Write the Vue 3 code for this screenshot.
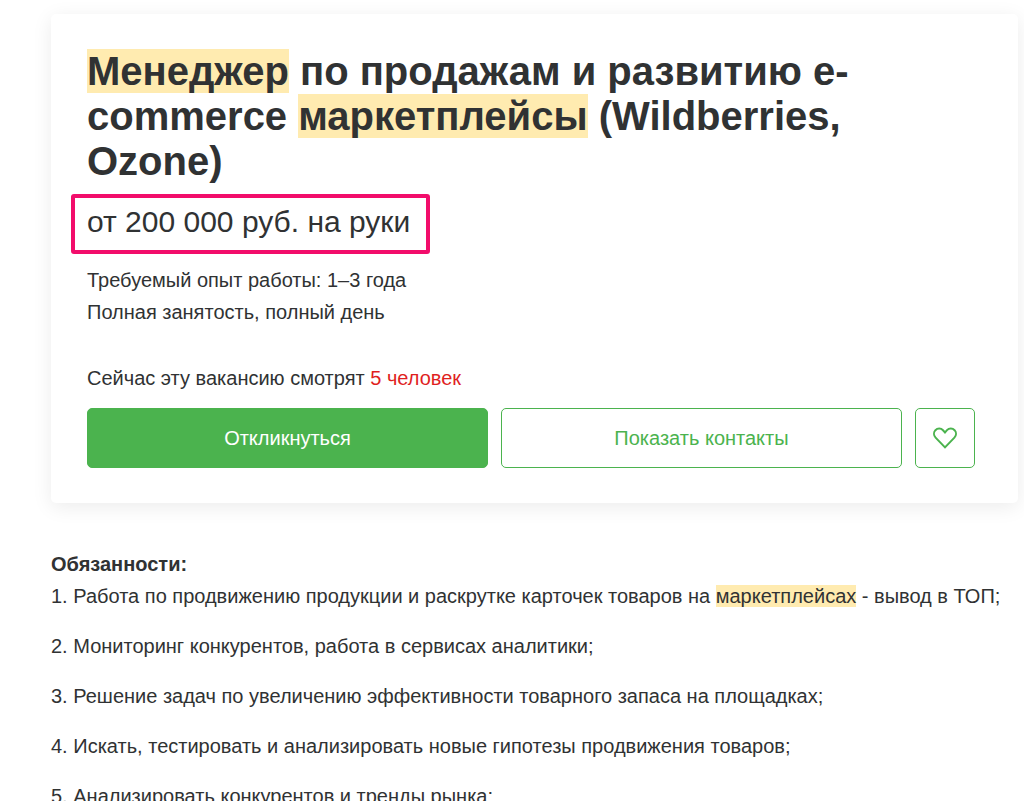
<script setup>
import { ref } from 'vue'

const liked = ref(false)

const duties = [
  [
    { text: 'Работа по продвижению продукции и раскрутке карточек товаров на ' },
    { text: 'маркетплейсах', mark: true },
    { text: ' - вывод в ТОП;' },
  ],
  [{ text: 'Мониторинг конкурентов, работа в сервисах аналитики;' }],
  [{ text: 'Решение задач по увеличению эффективности товарного запаса на площадках;' }],
  [{ text: 'Искать, тестировать и анализировать новые гипотезы продвижения товаров;' }],
  [{ text: 'Анализировать конкурентов и тренды рынка;' }],
]
</script>

<template>
  <main class="page">
    <section class="card">
      <h1 class="title">
        <mark>Менеджер</mark> по продажам и развитию e-commerce <mark>маркетплейсы</mark> (Wildberries, Ozone)
      </h1>
      <p class="salary">от 200 000 руб. на руки</p>
      <p class="fact">Требуемый опыт работы: 1–3 года</p>
      <p class="fact">Полная занятость, полный день</p>
      <p class="viewers">Сейчас эту вакансию смотрят <span class="count">5 человек</span></p>
      <div class="actions">
        <button type="button" class="btn primary">Откликнуться</button>
        <button type="button" class="btn">Показать контакты</button>
        <button type="button" class="btn like" aria-label="В избранное" :aria-pressed="liked" @click="liked = !liked">
          <svg width="24" height="22" viewBox="0 0 24 22" fill="none" stroke="currentColor" stroke-width="2">
            <path d="M12 20.4 2.6 10.6A5.4 5.4 0 0 1 2.4 3.2 5.2 5.2 0 0 1 10 3.2L12 5.4 14 3.2A5.2 5.2 0 0 1 21.6 3.2 5.4 5.4 0 0 1 21.4 10.6Z" />
          </svg>
        </button>
      </div>
    </section>

    <section class="duties">
      <h2>Обязанности:</h2>
      <p v-for="(parts, i) in duties" :key="i">
        {{ i + 1 }}.
        <template v-for="(part, j) in parts" :key="j"><mark v-if="part.mark">{{ part.text }}</mark><template v-else>{{ part.text }}</template></template>
      </p>
    </section>
  </main>
</template>

<style>
body {
  margin: 0;
  background: #fff;
}
</style>

<style scoped>
.page {
  padding: 14px 6px 0 51px;
  color: #303233;
  font-family: "Liberation Sans", Arial, sans-serif;
  font-size: 20px;
  line-height: 32px;
}
mark {
  color: inherit;
  background: #ffebb0;
}
h1, h2, p {
  margin: 0;
}
.card {
  padding: 35px 43px 35px 36px;
  border-radius: 5px;
  box-shadow: 0 4px 20px rgba(0, 0, 0, 0.08);
}
.title {
  max-width: 800px;
  font-size: 40px;
  line-height: 45px;
}
.salary {
  width: fit-content;
  box-sizing: border-box;
  margin: 10px 0 10px -16px;
  padding: 8px 16px 12px 12px;
  border: 4px solid #f20d6b;
  border-radius: 3px;
  font-size: 30px;
  line-height: 32px;
}
.viewers {
  margin-top: 34px;
}
.count {
  color: #e01f1f;
}
.actions {
  display: flex;
  gap: 13px;
  margin-top: 14px;
}
.btn {
  flex: 1;
  height: 60px;
  padding: 0;
  border: 1px solid #4bb34e;
  border-radius: 5px;
  background: #fff;
  color: #4bb34e;
  font: inherit;
}
.primary {
  background: #4bb34e;
  color: #fff;
}
.like {
  display: flex;
  align-items: center;
  justify-content: center;
  flex: 0 0 60px;
}
.duties {
  padding-top: 45px;
}
.duties h2 {
  font-size: 20px;
  line-height: 32px;
}
.duties p {
  margin-bottom: 18px;
}
</style>
